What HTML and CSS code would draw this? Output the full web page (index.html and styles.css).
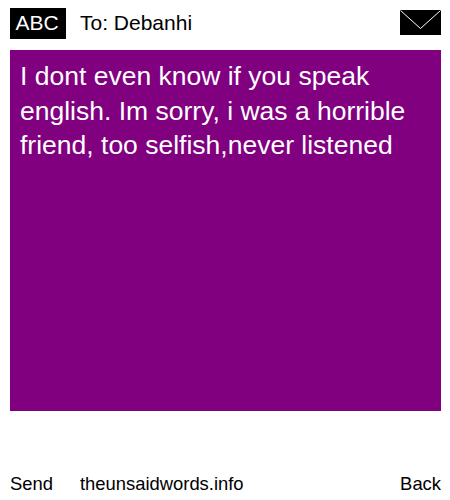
FILE: index.html
```html
<!DOCTYPE html>
<html lang="en">
<head>
  <meta charset="UTF-8" />
  <title>The Unsaid Words</title>
  <link rel="stylesheet" href="styles.css">
</head>
<body>
  <div class="page">
    <header class="top">
      <div class="abc">ABC</div>
      <div class="to">To: Debanhi</div>
      <svg class="envelope" width="41" height="25" viewBox="0 0 41 25">
        <rect width="41" height="25" fill="#000" />
        <path d="M0.5 0.5 L20.5 18.5 L40.5 0.5" fill="none" stroke="#fff" stroke-width="1" />
      </svg>
    </header>
    <main class="note">I dont even know if you speak english. Im sorry, i was a horrible friend, too selfish,never listened</main>
    <footer class="bottom">
      <a class="send">Send</a>
      <a class="site">theunsaidwords.info</a>
      <a class="back">Back</a>
    </footer>
  </div>
</body>
</html>
```

FILE: styles.css
```css
html, body {
  margin: 0;
  padding: 0;
  background: #fff;
}
body {
  font-family: "Liberation Sans", Arial, sans-serif;
  font-size: 18.4px;
  color: #000;
}
.page {
  width: 450px;
  height: 500px;
  box-sizing: border-box;
  padding: 8px 9px 0 10px;
  display: flex;
  flex-direction: column;
  overflow: hidden;
}
.top {
  display: flex;
  align-items: flex-start;
  height: 31px;
  font-size: 21px;
}
.abc {
  width: 56px;
  height: 31px;
  box-sizing: border-box;
  padding-right: 2px;
  line-height: 30px;
  background: #000;
  color: #fff;
  text-align: center;
}
.to {
  margin-left: 14px;
  line-height: 30px;
  flex: 1;
}
.envelope {
  margin-top: 2px;
  display: block;
}
.note {
  margin-top: 11px;
  height: 361px;
  box-sizing: border-box;
  padding: 9px 10px;
  background: #800080;
  color: #fff;
  font-size: 26.5px;
  line-height: 34.5px;
}
.bottom {
  display: flex;
  margin-top: 62px;
  line-height: 21px;
}
.send {
  width: 70px;
}
.site {
  flex: 1;
}
```
